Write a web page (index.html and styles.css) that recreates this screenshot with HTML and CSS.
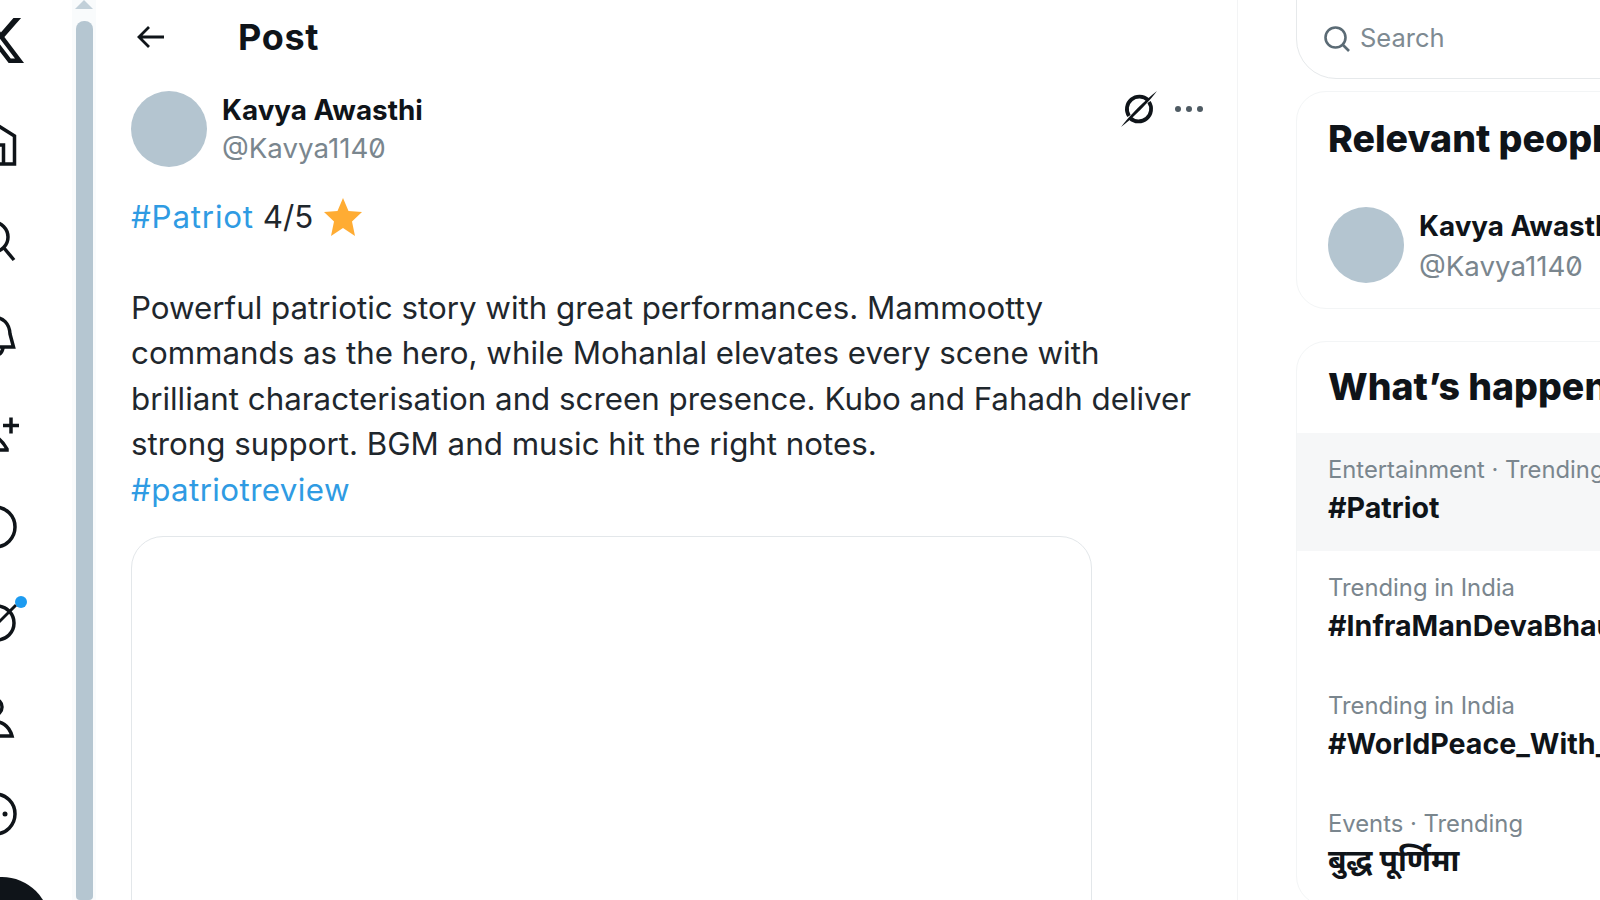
FILE: index.html
```html
<!DOCTYPE html>
<html lang="en">
<head>
    <meta charset="UTF-8">
    <meta name="viewport" content="width=device-width, initial-scale=1.0">
    <title>Post</title>
    <link rel="stylesheet" href="styles.css">
</head>
<body>
    <nav class="nav">
        <svg class="nav-icon logo" viewBox="-30 -30 60 60">
            <path transform="translate(-28.700 -27.200) scale(2.310)" d="M18.244 2.250h3.308l-7.227 8.260 8.502 11.240H16.170l-5.214-6.817L4.990 21.750H1.680l7.730-8.835L1.254 2.250H8.080l4.713 6.231zm-1.161 17.520h1.833L7.084 4.126H5.117z" fill="#0f1419"/>
        </svg>
        <svg class="nav-icon" viewBox="-30 -30 60 60">
            <path d="M-22 -8 -3 -20 14.500 -9V19H-22ZM-10 19V0H3.500V19" fill="none" stroke="#0f1419" stroke-width="3.500"/>
        </svg>
        <svg class="nav-icon" viewBox="-30 -30 60 60">
            <circle cx="-7" cy="-4" r="15" fill="none" stroke="#0f1419" stroke-width="3.500"/>
            <path d="M4 7 14 19" fill="none" stroke="#0f1419" stroke-width="3.500"/>
        </svg>
        <svg class="nav-icon" viewBox="-30 -30 60 60">
            <path d="M-24 11 -20 -2C-18 -24 9 -24 10 -2L13.500 11ZM-8 12C-8 21 1 21 3 12" fill="none" stroke="#0f1419" stroke-width="3.500"/>
        </svg>
        <svg class="nav-icon" viewBox="-30 -30 60 60">
            <circle cx="-14" cy="-8" r="8" fill="none" stroke="#0f1419" stroke-width="3.500"/>
            <path d="M-28 17C-24 4 -6 -6 7 17V18H-28Z" fill="none" stroke="#0f1419" stroke-width="3.500"/>
            <path d="M11 -14.500V1.500M3 -6.500H19" fill="none" stroke="#0f1419" stroke-width="3.500"/>
        </svg>
        <svg class="nav-icon" viewBox="-30 -30 60 60">
            <circle cx="-5" cy="0" r="20" fill="none" stroke="#0f1419" stroke-width="3.500"/>
        </svg>
        <svg class="nav-icon" viewBox="-30 -30 60 60">
            <circle cx="-3" cy="0" r="17" fill="none" stroke="#0f1419" stroke-width="3.500"/>
            <path d="M-8 6 16 -18" fill="none" stroke="#0f1419" stroke-width="3"/>
            <circle cx="21" cy="-21" r="6" fill="#1d9bf0"/>
        </svg>
        <svg class="nav-icon" viewBox="-30 -30 60 60">
            <circle cx="-6" cy="-11" r="8" fill="none" stroke="#0f1419" stroke-width="3.500"/>
            <path d="M-25 18C-20 2 6 -4 12 18Z" fill="none" stroke="#0f1419" stroke-width="3.500"/>
        </svg>
        <svg class="nav-icon" viewBox="-30 -30 60 60">
            <circle cx="-5" cy="0" r="20" fill="none" stroke="#0f1419" stroke-width="3.500"/>
            <circle cx="5" cy="0" r="2.500" fill="#0f1419"/>
        </svg>
        <div class="post-btn"></div>
    </nav>

    <div class="scrollbar">
        <div class="scroll-arrow"></div>
        <div class="scroll-thumb"></div>
    </div>

    <main class="main">
        <header class="topbar">
            <svg class="back" viewBox="0 0 28 24">
                <path d="M27 12H3M12 2 2 12 12 22" fill="none" stroke="#0f1419" stroke-width="2.800"/>
            </svg>
            <h1>Post</h1>
        </header>

        <div class="author">
            <div class="avatar"></div>
            <div class="author-text">
                <div class="name">Kavya Awasthi</div>
                <div class="handle">@Kavya1140</div>
            </div>
            <svg class="grok" viewBox="0 0 38 38">
                <path d="M28 10A12.500 12.500 0 0 0 9 26M10 28A12.500 12.500 0 0 0 29 12" fill="none" stroke="#0f1419" stroke-width="3.800"/>
                <path d="M1 37C9 26 25 10 37 1 29 12 13 28 1 37Z" fill="#0f1419"/>
            </svg>
            <div class="dots"><span></span><span></span><span></span></div>
        </div>

        <p class="tweet">
            <span class="link wide">#Patriot</span> 4/5 <svg class="star" viewBox="0 0 38 38"><path d="M19 0 24.500 13 38 14 28 23.500 31 38 19 30 7 38 10 23.500 0 14 13.500 13Z" fill="#ffac33"/></svg><br>
            <br>
            Powerful patriotic story with great performances. Mammootty commands as the hero, while Mohanlal elevates every scene with brilliant characterisation and screen presence. Kubo and Fahadh deliver strong support. BGM and music hit the right notes.<br>
            <span class="link">#patriotreview</span>
        </p>

        <div class="media-card"></div>
    </main>

    <aside class="side">
        <div class="search">
            <svg class="search-icon" viewBox="0 0 26 26">
                <circle cx="11.500" cy="11.500" r="10" fill="none" stroke="#5b6b75" stroke-width="2.600"/>
                <path d="M18.500 18.500 25 25" fill="none" stroke="#5b6b75" stroke-width="2.600"/>
            </svg>
            <span class="search-text">Search</span>
        </div>

        <section class="card people">
            <h2>Relevant people</h2>
            <div class="person">
                <div class="avatar"></div>
                <div class="author-text">
                    <div class="name">Kavya Awasthi</div>
                    <div class="handle">@Kavya1140</div>
                </div>
            </div>
        </section>

        <section class="card happening">
            <h2>What’s happening</h2>
            <div class="trend active">
                <div class="meta">Entertainment · Trending</div>
                <div class="topic">#Patriot</div>
            </div>
            <div class="trend">
                <div class="meta">Trending in India</div>
                <div class="topic">#InfraManDevaBhau</div>
            </div>
            <div class="trend">
                <div class="meta">Trending in India</div>
                <div class="topic">#WorldPeace_With_Sant</div>
            </div>
            <div class="trend">
                <div class="meta">Events · Trending</div>
                <div class="topic hindi">बुद्ध पूर्णिमा</div>
            </div>
        </section>
    </aside>
</body>
</html>
```

FILE: styles.css
```css
html, body {
    margin: 0;
    height: 900px;
    overflow: hidden;
}
body {
    display: flex;
    background: #fff;
    color: #0f1419;
    font-family: Inter, "Noto Sans", "Liberation Sans", sans-serif;
}

/* left nav, cut off by the window edge */
.nav {
    flex: 0 0 72px;
    height: 900px;
    overflow: hidden;
    display: flex;
    flex-direction: column;
    gap: 35.5px;
    padding-top: 10px;
    box-sizing: border-box;
}
.nav-icon {
    flex: none;
    width: 60px;
    height: 60px;
    margin-left: -30px;
}
.logo {
    margin-bottom: 9.5px;
}
.post-btn {
    flex: none;
    width: 96px;
    height: 96px;
    margin: -2px 0 0 -46px;
    border-radius: 50%;
    background: #0f1419;
}

.scrollbar {
    flex: 0 0 24px;
    height: 900px;
    background: #f9fbfc;
    display: flex;
    flex-direction: column;
    align-items: center;
}
.scroll-arrow {
    width: 0;
    height: 0;
    border-left: 9px solid transparent;
    border-right: 9px solid transparent;
    border-bottom: 9px solid #c2d0d9;
}
.scroll-thumb {
    width: 17px;
    flex: 1;
    margin-top: 12px;
    border-radius: 8px 8px 4px 4px;
    background: #b5c6d1;
}

.main {
    flex: 0 0 1142px;
    box-sizing: border-box;
    padding: 0 34px 0 35px;
    border-right: 1px solid #f3f4f5;
}
.topbar {
    display: flex;
    align-items: center;
    height: 73px;
}
.back {
    width: 28px;
    height: 24px;
    margin-left: 6px;
}
.topbar h1 {
    margin: 0 0 0 73px;
    font-size: 36px;
    font-weight: 700;
    letter-spacing: 0.7px;
}

.author {
    display: flex;
    align-items: flex-start;
    margin-top: 18px;
}
.avatar {
    flex: none;
    width: 76px;
    height: 76px;
    border-radius: 50%;
    background: #b4c5d0;
}
.author-text {
    margin-left: 15px;
}
.name {
    margin-top: 1px;
    font-size: 27.8px;
    line-height: 36px;
    font-weight: 700;
    white-space: nowrap;
}
.handle {
    margin-top: 1px;
    font-size: 27.7px;
    line-height: 38px;
    color: #7a868e;
    font-feature-settings: "zero";
    white-space: nowrap;
}
.person .handle {
    margin-top: 3px;
}
.grok {
    width: 38px;
    height: 38px;
    margin-left: auto;
    margin-top: -1px;
}
.dots {
    display: flex;
    gap: 5px;
    margin: 15px 0 0 17px;
}
.dots span {
    width: 6px;
    height: 6px;
    border-radius: 50%;
    background: #4f5b63;
}

.tweet {
    margin: 27.5px 0 0;
    font-size: 31.3px;
    line-height: 45.6px;
    color: #1f272d;
}
.link {
    color: #2f9be3;
    letter-spacing: 0.4px;
}
.wide {
    letter-spacing: 0.8px;
}
.star {
    width: 38px;
    height: 38px;
    margin-left: 2px;
    vertical-align: -8px;
}
.media-card {
    width: 961px;
    height: 500px;
    margin-top: 22.5px;
    box-sizing: border-box;
    border: 1.500px solid #e3e7ea;
    border-radius: 32px;
}

/* right column runs past the window edge */
.side {
    flex: none;
    width: 450px;
    padding-left: 58px;
}
.search {
    display: flex;
    align-items: center;
    height: 119px;
    margin-top: -40px;
    padding: 38px 0 0 27px;
    box-sizing: border-box;
    border: 1.500px solid #e6e9eb;
    border-radius: 40px;
    color: #7e8a92;
    font-size: 25.5px;
}
.search-icon {
    width: 26px;
    height: 26px;
    margin-right: 10px;
}
.search-text {
    margin-bottom: 2px;
}
.card {
    border: 1.500px solid #f3f5f6;
    border-radius: 30px;
}
.card h2 {
    margin: 0;
    padding-left: 31px;
    font-size: 37.5px;
    font-weight: 800;
    white-space: nowrap;
}
.people {
    height: 218px;
    margin-top: 12px;
    box-sizing: border-box;
    padding-top: 24px;
}
.people h2 {
    line-height: 45px;
}
.person {
    display: flex;
    margin-top: 46px;
    padding-left: 31px;
}
.happening {
    margin-top: 32px;
    padding-top: 22px;
}
.happening h2 {
    line-height: 45px;
    margin-bottom: 24px;
}
.trend {
    height: 118px;
    box-sizing: border-box;
    padding: 18px 0 0 31px;
}
.trend.active {
    background: #f6f7f8;
}
.meta {
    font-size: 23.8px;
    line-height: 38px;
    color: #7a868e;
    white-space: nowrap;
}
.topic {
    font-size: 28.6px;
    line-height: 38px;
    font-weight: 700;
    white-space: nowrap;
}
.hindi {
    font-size: 30px;
    margin-top: -2px;
}
```
